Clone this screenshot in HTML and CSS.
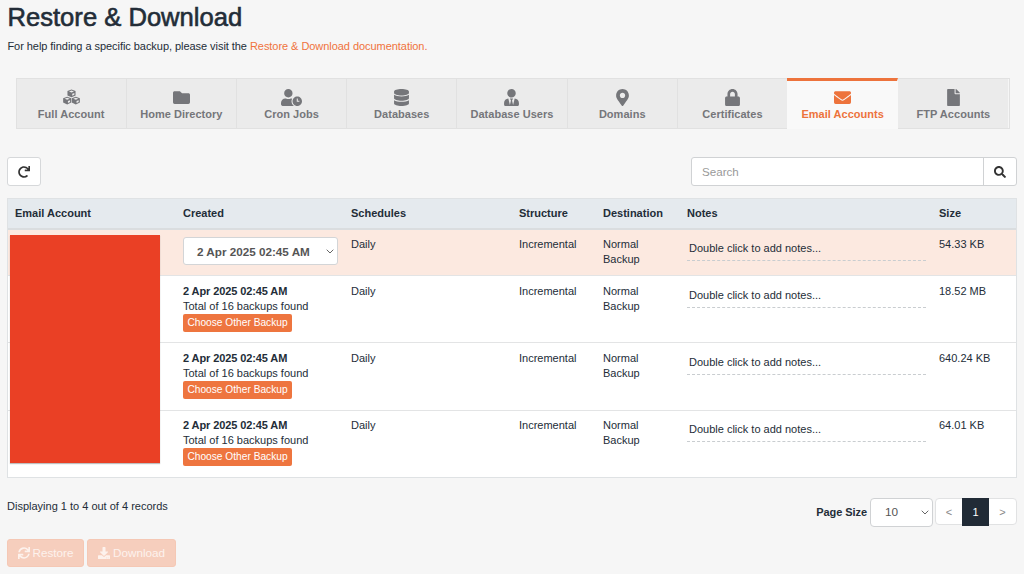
FILE: index.html
```html
<!DOCTYPE html>
<html lang="en">
<head>
<meta charset="utf-8">
<title>Restore &amp; Download</title>
<link rel="stylesheet" href="styles.css">
</head>
<body>
<main class="page">
  <h1 class="title">Restore &amp; Download</h1>
  <p class="help"><span class="help-text">For help finding a specific backup, please visit the </span><a class="link">Restore &amp; Download documentation.</a></p>

  <nav class="tabs">
    <a class="tab"><svg class="icon" viewBox="0 0 512 512"><g class="cube"><path d="M256 14l122 46v132l-122 58-122-58V60z"/><path d="M126 232l122 46v132l-122 60-122-60V278z"/><path d="M386 232l122 46v132l-122 60-122-60V278z"/></g><g class="cube-face"><path d="M256 48l76 28-76 32-76-32z"/><path d="M126 266l76 28-76 32-76-32z"/><path d="M386 266l76 28-76 32-76-32z"/><path d="M278 146l64-28v54l-64 32z"/><path d="M148 364l64-28v54l-64 34z"/><path d="M408 364l64-28v54l-64 34z"/></g></svg><span>Full Account</span></a>
    <a class="tab"><svg class="icon" viewBox="0 0 512 512"><path d="M464 128H272l-64-64H48C21.49 64 0 85.49 0 112v288c0 26.51 21.49 48 48 48h416c26.51 0 48-21.49 48-48V176c0-26.51-21.49-48-48-48z"/></svg><span>Home Directory</span></a>
    <a class="tab"><svg class="icon icon-wide" viewBox="0 0 640 512"><path d="M496 224c-79.6 0-144 64.4-144 144s64.4 144 144 144 144-64.4 144-144-64.4-144-144-144zm64 150.3c0 5.3-4.4 9.7-9.7 9.7h-60.6c-5.3 0-9.7-4.4-9.7-9.7v-76.6c0-5.3 4.4-9.7 9.7-9.7h12.6c5.3 0 9.7 4.4 9.7 9.7V352h38.3c5.3 0 9.7 4.4 9.7 9.7v12.6zM320 368c0-27.8 6.7-54.1 18.2-77.5-8-1.5-16.2-2.5-24.6-2.5h-16.7c-22.2 10.2-46.9 16-72.9 16s-50.6-5.8-72.9-16h-16.7C60.2 288 0 348.2 0 422.4V464c0 26.5 21.5 48 48 48h347.1c-45.3-31.9-75.1-84.5-75.1-144zm-96-112c70.7 0 128-57.3 128-128S294.7 0 224 0 96 57.3 96 128s57.3 128 128 128z"/></svg><span>Cron Jobs</span></a>
    <a class="tab"><svg class="icon" viewBox="0 0 448 512"><path d="M448 73.143v45.714C448 159.143 347.667 192 224 192S0 159.143 0 118.857V73.143C0 32.857 100.333 0 224 0s224 32.857 224 73.143zM448 176v102.857C448 319.143 347.667 352 224 352S0 319.143 0 278.857V176c48.125 33.143 136.208 48.572 224 48.572S399.874 209.143 448 176zm0 160v102.857C448 479.143 347.667 512 224 512S0 479.143 0 438.857V336c48.125 33.143 136.208 48.572 224 48.572S399.874 369.143 448 336z"/></svg><span>Databases</span></a>
    <a class="tab"><svg class="icon" viewBox="0 0 448 512"><path d="M224 256c70.7 0 128-57.3 128-128S294.7 0 224 0 96 57.3 96 128s57.3 128 128 128zm95.8 32.6L272 480l-32-136 32-56h-96l32 56-32 136-47.8-191.4C56.9 292 0 350.3 0 422.4V464c0 26.5 21.5 48 48 48h352c26.5 0 48-21.5 48-48v-41.6c0-72.1-56.9-130.4-128.2-133.8z"/></svg><span>Database Users</span></a>
    <a class="tab"><svg class="icon" viewBox="0 0 384 512"><path d="M172.268 501.67C26.97 291.031 0 269.413 0 192 0 85.961 85.961 0 192 0s192 85.961 192 192c0 77.413-26.97 99.031-172.268 309.67-9.535 13.774-29.93 13.773-39.464 0zM192 272c44.183 0 80-35.817 80-80s-35.817-80-80-80-80 35.817-80 80 35.817 80 80 80z"/></svg><span>Domains</span></a>
    <a class="tab"><svg class="icon" viewBox="0 0 448 512"><path d="M400 224h-24v-72C376 68.2 307.8 0 224 0S72 68.2 72 152v72H48c-26.5 0-48 21.5-48 48v192c0 26.5 21.5 48 48 48h352c26.5 0 48-21.5 48-48V272c0-26.5-21.5-48-48-48zm-104 0H152v-72c0-39.7 32.3-72 72-72s72 32.3 72 72v72z"/></svg><span>Certificates</span></a>
    <a class="tab tab-active"><svg class="icon" viewBox="0 0 512 512"><path d="M502.3 190.8c3.9-3.1 9.7-.2 9.7 4.7V400c0 26.5-21.5 48-48 48H48c-26.5 0-48-21.5-48-48V195.6c0-5 5.7-7.8 9.7-4.7 22.4 17.4 52.1 39.5 154.1 113.6 21.1 15.4 56.7 47.8 92.2 47.6 35.7.3 72-32.8 92.3-47.6 102-74.1 131.6-96.3 154-113.7zM256 320c23.2.4 56.6-29.2 73.4-41.4 132.7-96.3 142.8-104.7 173.4-128.7 5.8-4.5 9.2-11.5 9.2-18.9v-19c0-26.5-21.5-48-48-48H48c-26.5 0-48 21.5-48 48v19c0 7.4 3.4 14.3 9.2 18.9 30.6 23.9 40.7 32.4 173.4 128.7 16.8 12.2 50.2 41.8 73.4 41.4z"/></svg><span>Email Accounts</span></a>
    <a class="tab"><svg class="icon" viewBox="0 0 384 512"><path d="M224 136V0H24C10.7 0 0 10.7 0 24v464c0 13.3 10.7 24 24 24h336c13.3 0 24-10.7 24-24V160H248c-13.2 0-24-10.8-24-24zm160-14.1v6.1H256V0h6.1c6.4 0 12.5 2.5 17 7l97.9 98c4.5 4.5 7 10.6 7 16.9z"/></svg><span>FTP Accounts</span></a>
  </nav>

  <div class="toolbar">
    <button class="refresh"><svg class="icon-sm" viewBox="0 0 512 512"><path d="M500.33 0h-47.41a12 12 0 0 0-12 12.57l4 82.76A247.42 247.42 0 0 0 256 8C119.34 8 7.9 119.53 8 256.19 8.1 393.07 119.1 504 256 504a247.1 247.1 0 0 0 166.18-63.91 12 12 0 0 0 .48-17.43l-34-34a12 12 0 0 0-16.38-.55A176 176 0 1 1 402.1 157.8l-101.53-4.87a12 12 0 0 0-12.57 12v47.41a12 12 0 0 0 12 12h200.33a12 12 0 0 0 12-12V12a12 12 0 0 0-12-12z"/></svg></button>
    <div class="search">
      <span class="search-field">Search</span>
      <button class="search-button"><svg class="icon-sm" viewBox="0 0 512 512"><path d="M505 442.7L405.3 343c-4.5-4.5-10.6-7-17-7H372c27.6-35.3 44-79.7 44-128C416 93.1 322.9 0 208 0S0 93.1 0 208s93.1 208 208 208c48.3 0 92.7-16.4 128-44v16.3c0 6.4 2.5 12.5 7 17l99.7 99.7c9.4 9.4 24.6 9.4 33.9 0l28.3-28.3c9.4-9.4 9.4-24.6.1-34zM208 336c-70.7 0-128-57.2-128-128 0-70.7 57.2-128 128-128 70.7 0 128 57.2 128 128 0 70.7-57.2 128-128 128z"/></svg></button>
    </div>
  </div>

  <section class="table">
    <div class="row head"><span>Email Account</span><span>Created</span><span>Schedules</span><span>Structure</span><span>Destination</span><span>Notes</span><span>Size</span></div>
    <div class="row selected">
      <div></div>
      <div class="date-select"><span>2 Apr 2025 02:45 AM</span><svg class="chevron" viewBox="0 0 8 5"><path d="M.7.7L4 4 7.3.7"/></svg></div>
      <div>Daily</div><div>Incremental</div><div>Normal Backup</div><div class="note">Double click to add notes...</div><div>54.33 KB</div>
    </div>
    <div class="row">
      <div></div>
      <div class="created"><b>2 Apr 2025 02:45 AM</b><span>Total of 16 backups found</span><button class="choose">Choose Other Backup</button></div>
      <div>Daily</div><div>Incremental</div><div>Normal Backup</div><div class="note">Double click to add notes...</div><div>18.52 MB</div>
    </div>
    <div class="row">
      <div></div>
      <div class="created"><b>2 Apr 2025 02:45 AM</b><span>Total of 16 backups found</span><button class="choose">Choose Other Backup</button></div>
      <div>Daily</div><div>Incremental</div><div>Normal Backup</div><div class="note">Double click to add notes...</div><div>640.24 KB</div>
    </div>
    <div class="row">
      <div></div>
      <div class="created"><b>2 Apr 2025 02:45 AM</b><span>Total of 16 backups found</span><button class="choose">Choose Other Backup</button></div>
      <div>Daily</div><div>Incremental</div><div>Normal Backup</div><div class="note">Double click to add notes...</div><div>64.01 KB</div>
    </div>
    <div class="redaction"></div>
  </section>

  <div class="footer">
    <span class="count">Displaying 1 to 4 out of 4 records</span>
    <div class="paging">
      <b class="size-label">Page Size</b>
      <div class="size-select"><span>10</span><svg class="chevron" viewBox="0 0 8 5"><path d="M.7.7L4 4 7.3.7"/></svg></div>
      <div class="pager"><a>&lt;</a><a class="current">1</a><a>&gt;</a></div>
    </div>
  </div>

  <div class="actions">
    <button class="action restore"><svg class="icon-sm" viewBox="0 0 512 512"><path d="M440.65 12.57l4 82.77A247.16 247.16 0 0 0 255.83 8C134.73 8 33.91 94.92 12.29 209.82A12 12 0 0 0 24.09 224h49.05a12 12 0 0 0 11.67-9.26 175.91 175.91 0 0 1 317-56.94l-101.46-4.86a12 12 0 0 0-12.57 12v47.41a12 12 0 0 0 12 12H500a12 12 0 0 0 12-12V12a12 12 0 0 0-12-12h-47.37a12 12 0 0 0-11.98 12.57zM255.83 432a175.61 175.61 0 0 1-146-77.8l101.8 4.87a12 12 0 0 0 12.57-12v-47.4a12 12 0 0 0-12-12H12a12 12 0 0 0-12 12V500a12 12 0 0 0 12 12h47.35a12 12 0 0 0 12-12.6l-4.15-82.57A247.17 247.17 0 0 0 255.83 504c121.11 0 221.93-86.92 243.55-201.82a12 12 0 0 0-11.8-14.18h-49.05a12 12 0 0 0-11.67 9.26A175.86 175.86 0 0 1 255.83 432z"/></svg><span>Restore</span></button>
    <button class="action download"><svg class="icon-sm" viewBox="0 0 512 512"><path d="M216 0h80c13.3 0 24 10.7 24 24v168h87.7c17.8 0 26.7 21.5 14.1 34.1L269.7 378.3c-7.5 7.5-19.8 7.5-27.3 0L90.1 226.1c-12.6-12.6-3.7-34.1 14.1-34.1H192V24c0-13.3 10.7-24 24-24zm296 376v112c0 13.3-10.7 24-24 24H24c-13.3 0-24-10.7-24-24V376c0-13.3 10.7-24 24-24h146.7l49 49c20.1 20.1 52.5 20.1 72.6 0l49-49H488c13.3 0 24 10.7 24 24zm-124 88c0-11-9-20-20-20s-20 9-20 20 9 20 20 20 20-9 20-20zm64 0c0-11-9-20-20-20s-20 9-20 20 9 20 20 20 20-9 20-20z"/></svg><span>Download</span></button>
  </div>
</main>
</body>
</html>
```

FILE: styles.css
```css
* { box-sizing: border-box; }
body {
  margin: 0;
  height: 574px;
  overflow: hidden;
  background: #f6f6f6;
  color: #232d38;
  font: 11px/15.4px "Liberation Sans", Arial, sans-serif;
}
button { font: inherit; margin: 0; padding: 0; }
svg { display: block; fill: currentColor; flex: none; }

.page { width: 1024px; padding: 3px 7px 0; }
.title {
  margin: 0;
  padding-left: 0.5px;
  height: 28px;
  font-size: 25.6px;
  line-height: 29px;
  font-weight: 400;
  letter-spacing: 0;
  -webkit-text-stroke: 0.6px #232d38;
}
.help { margin: 7px 0 0; padding-left: 0.4px; height: 16px; line-height: 16px; letter-spacing: -0.05px; white-space: nowrap; }
.link { color: #f0733c; }

.tabs {
  display: grid;
  grid-template-columns: repeat(9, 1fr);
  width: 994px;
  height: 51px;
  margin: 24px 0 0 8.5px;
  border: 1px solid #e1e1e1;
}
.tab {
  display: flex;
  flex-direction: column;
  align-items: center;
  gap: 1px;
  padding-top: 10px;
  border-right: 1px solid #e1e1e1;
  background: #ebebeb;
  color: #75767a;
  font-weight: 700;
  line-height: 15px;
  letter-spacing: 0.03px;
  white-space: nowrap;
}
.tab:last-child { border-right: 0; }
.tab-active {
  margin: -1px 0 -1px -1px;
  padding: 8px 0 0 1px;
  border-top: 3px solid #ed733c;
  border-right-color: #f9f9f9;
  background: #f9f9f9;
  color: #ed733c;
}
.icon { width: 17px; height: 17px; }
.icon-wide { width: 21px; }
.cube-face { fill: #ebebeb; }

.toolbar { display: flex; justify-content: space-between; margin-top: 28px; height: 29px; }
.refresh {
  display: flex;
  align-items: center;
  justify-content: center;
  width: 34px;
  height: 29px;
  border: 1px solid #d6d8da;
  border-radius: 3px;
  background: #fff;
  color: #333;
}
.icon-sm { width: 12px; height: 12px; }
.search {
  display: flex;
  width: 326px;
  border: 1px solid #d0d2d4;
  border-radius: 3px;
  background: #fff;
}
.search-field { flex: 1; padding: 6px 10px; color: #999; font-size: 11.6px; line-height: 16px; }
.search-button {
  display: flex;
  align-items: center;
  justify-content: center;
  width: 33px;
  border: 0;
  border-left: 1px solid #d0d2d4;
  background: none;
  color: #333;
}
.toolbar, .table, .footer { width: 1010px; }

.table {
  position: relative;
  margin-top: 12px;
  border: 1px solid #dfe2e4;
  background: #fff;
}
.row {
  display: grid;
  grid-template-columns: 167px 168px 168px 84px 84px 252px 1fr;
  height: 67px;
  padding-top: 8px;
  border-bottom: 1px solid #e3e4e5;
}
.row:nth-child(4) { height: 68px; }
.row:nth-child(5) { border-bottom: 0; height: 66px; padding-top: 7px; }
.row > * { padding: 0 8px; }
.row > :nth-child(1) { padding-left: 7px; }
.head {
  height: 31px;
  padding-top: 7px;
  border-bottom: 2px solid #dadddf;
  background: #e5eaee;
  font-weight: 700;
}
.selected { height: 46px; padding-top: 7px; background: #fce9e0; }
.row > .date-select {
  display: flex;
  align-items: center;
  justify-content: space-between;
  width: 155px;
  height: 28px;
  margin-left: 8px;
  padding: 1px 3px 0 13px;
  border: 1px solid #d3d5d7;
  border-radius: 3px;
  background: #fff;
  color: #555;
  font-size: 11.7px;
  font-weight: 700;
}
.chevron { width: 8px; height: 5px; fill: none; stroke: #666; stroke-width: 1; }
.created { display: flex; flex-direction: column; align-items: flex-start; white-space: nowrap; }
.created b { letter-spacing: -0.1px; }
.choose {
  width: 109px;
  height: 18px;
  margin-top: -0.8px;
  border: 0;
  border-radius: 2px;
  background: #ee753f;
  color: #fff;
  font-size: 10.2px;
  line-height: 18px;
  white-space: nowrap;
}
.row > .note {
  height: 24px;
  margin: 0 5px 0 8px;
  padding: 4px 2px 0;
  border-bottom: 1px dashed #c9cdd0;
}
.redaction {
  position: absolute;
  left: 2px;
  top: 36px;
  width: 150px;
  height: 228px;
  background: #ea4025;
  box-shadow: 0 1px 1px rgba(0, 0, 0, 0.25);
}

.footer { display: flex; justify-content: space-between; margin-top: 20px; height: 29px; }
.count { padding-top: 1px; }
.paging { display: flex; }
.size-label { padding-top: 7px; margin-right: 3px; letter-spacing: -0.07px; }
.size-select {
  display: flex;
  align-items: center;
  justify-content: space-between;
  width: 63px;
  height: 29px;
  margin-right: 2px;
  padding: 0 3px 0 14px;
  border: 1px solid #d0d2d4;
  border-radius: 4px;
  background: #fff;
  color: #555;
  font-size: 11.8px;
}
.pager {
  display: grid;
  grid-template-columns: 26px 27px 27px;
  height: 27px;
  border: 1px solid #e1e2e3;
  border-radius: 4px;
  background: #fff;
  color: #888;
  line-height: 26px;
  text-align: center;
}
.current { margin: -1px 0; background: #212b36; color: #fff; line-height: 28px; }

.actions { display: flex; gap: 3px; margin-top: 12px; }
.action {
  display: flex;
  align-items: center;
  justify-content: center;
  gap: 3px;
  height: 28px;
  border: 1px solid #f5c8b5;
  border-radius: 3px;
  background: #f6cebd;
  color: #fdf2ed;
  font-size: 11.7px;
}
.restore { width: 77px; }
.download { width: 89px; }
```
